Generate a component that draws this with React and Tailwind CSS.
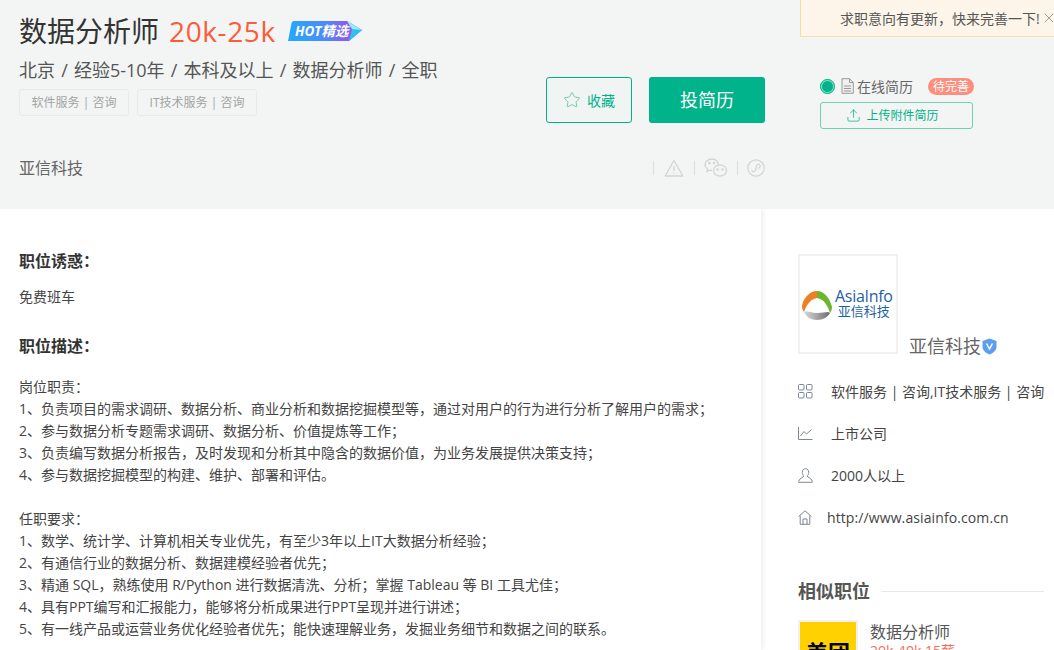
import React from 'react';
import { Star, Upload, X } from 'lucide-react';

const font = { fontFamily: '"Open Sans", "Noto Sans CJK SC", sans-serif' };

const duties = [
  '岗位职责：',
  '1、负责项目的需求调研、数据分析、商业分析和数据挖掘模型等，通过对用户的行为进行分析了解用户的需求；',
  '2、参与数据分析专题需求调研、数据分析、价值提炼等工作；',
  '3、负责编写数据分析报告，及时发现和分析其中隐含的数据价值，为业务发展提供决策支持；',
  '4、参与数据挖掘模型的构建、维护、部署和评估。',
];

const requirements = [
  '任职要求：',
  '1、数学、统计学、计算机相关专业优先，有至少3年以上IT大数据分析经验；',
  '2、有通信行业的数据分析、数据建模经验者优先；',
  '3、精通 SQL，熟练使用 R/Python 进行数据清洗、分析；掌握 Tableau 等 BI 工具尤佳；',
  '4、具有PPT编写和汇报能力，能够将分析成果进行PPT呈现并进行讲述；',
  '5、有一线产品或运营业务优化经验者优先；能快速理解业务，发掘业务细节和数据之间的联系。',
];

function HotBadge() {
  return (
    <svg width="76" height="23" viewBox="0 0 76 23" className="ml-[11px] mt-[1px] shrink-0">
      <defs>
        <linearGradient id="hot" x1="0" x2="1" y1="0" y2="0">
          <stop offset="0" stopColor="#25a8fb" />
          <stop offset="0.5" stopColor="#4b8cf8" />
          <stop offset="0.8" stopColor="#8a5cf0" />
        </linearGradient>
      </defs>
      <path d="M7 1H60L75 10L62 21H1L4 6Q4.500 1 7 1Z" fill="url(#hot)" />
      <path d="M60 1L75 10L62 21L65 9Z" fill="#2fc0ee" />
      <path d="M60 1L75 10L65 9Z" fill="#9be9f6" />
      <text x="8" y="16" fontSize="13.500" fontWeight="700" fontStyle="italic" fill="#fff">HOT精选</text>
    </svg>
  );
}

function Tag({ width, children }) {
  return (
    <span className={`${width} h-[27px] flex items-center justify-center border border-[#e8eaea] rounded-[3px] text-[12px] text-[#a3a3a3] whitespace-nowrap`}>
      {children}
    </span>
  );
}

function ShareIcons() {
  return (
    <div className="flex items-center text-[#d3d5d5]">
      <span className="w-px h-[14px] bg-[#dcdedd]" />
      <svg width="20" height="18" viewBox="0 0 20 18" fill="none" stroke="currentColor" strokeWidth="1.300" className="ml-[10px]">
        <path d="M10 1.500L18.800 17H1.200Z" strokeLinejoin="round" />
        <path d="M10 7V12M10 13.500V14.500" />
      </svg>
      <span className="w-px h-[14px] bg-[#dcdedd] ml-[10px]" />
      <svg width="24" height="20" viewBox="0 0 24 20" fill="none" stroke="currentColor" strokeWidth="1.300" className="ml-[9px]">
        <path d="M14.500 6.500C13.800 3.500 11.500 1 8 1C4 1 1 3.600 1 6.800C1 8.600 2 10 3.500 11L3 13.500L5.500 12.200C6.200 12.400 7 12.500 8 12.500" />
        <ellipse cx="16" cy="12.500" rx="6.500" ry="5.500" />
        <circle cx="5.500" cy="5" r="0.700" fill="currentColor" />
        <circle cx="10" cy="5" r="0.700" fill="currentColor" />
        <circle cx="13.500" cy="11.500" r="0.600" fill="currentColor" />
        <circle cx="18.500" cy="11.500" r="0.600" fill="currentColor" />
      </svg>
      <span className="w-px h-[14px] bg-[#dcdedd] ml-[9px]" />
      <svg width="18" height="18" viewBox="0 0 18 18" fill="none" stroke="currentColor" strokeWidth="1.200" className="ml-[9px]">
        <circle cx="9" cy="9" r="8.200" />
        <path d="M4.800 11C4.800 13.500 8 13.500 8.500 11L9.500 7C10 4.500 13.200 4.500 13.200 7C13.200 8.500 12 9.200 10.800 9" />
      </svg>
    </div>
  );
}

function AsiaInfoLogo() {
  return (
    <div className="w-[100px] h-[100px] border-2 border-[#f1f1f1] flex items-center pl-[1px] shrink-0">
      <svg width="32" height="32" viewBox="0 0 32 32" className="mt-[2px] shrink-0">
        <defs>
          <linearGradient id="ring-bottom" x1="0" x2="1" y1="0" y2="0">
            <stop offset="0" stopColor="#d9d9d9" />
            <stop offset="1" stopColor="#6f6f6f" />
          </linearGradient>
        </defs>
        <path d="M16 2C8 2 2 10 1 17C1 19 1.500 21 3 23C5 17 9 10 16 9Z" fill="#ee7f22" />
        <path d="M16 2C23 2 29 9 31 18C31 20 30.500 22 29 24C27 17 23 10 16 9Z" fill="#6cb52d" />
        <path d="M3 23C5 28 10 31 16 31C22 31 27 28 29 24C27 22 24 24 16 24C9 24 5 21 3 23Z" fill="url(#ring-bottom)" />
      </svg>
      <div className="ml-[2px] flex flex-col items-center text-[#1f5fa3] leading-[15px]">
        <span className="text-[16px] tracking-[-0.3px] whitespace-nowrap">AsiaInfo</span>
        <span className="text-[13px] whitespace-nowrap">亚信科技</span>
      </div>
    </div>
  );
}

function GridIcon() {
  return (
    <svg width="15" height="15" viewBox="0 0 15 15" fill="none" stroke="#7d8794" className="shrink-0">
      <rect x=".5" y=".5" width="5.500" height="5.500" rx="1" />
      <rect x="8.500" y=".5" width="5.500" height="5.500" rx="1" />
      <rect x=".5" y="8.500" width="5.500" height="5.500" rx="1" />
      <rect x="8.500" y="8.500" width="5.500" height="5.500" rx="1" />
    </svg>
  );
}

function TrendIcon() {
  return (
    <svg width="15" height="15" viewBox="0 0 15 15" fill="none" stroke="#7d8794" className="shrink-0">
      <path d="M.5 1V13.500H14.500" />
      <path d="M2.500 10L6 5.500L8.500 8L13.500 3.500" />
    </svg>
  );
}

function PersonIcon() {
  return (
    <svg width="15" height="15" viewBox="0 0 15 15" fill="none" stroke="#7d8794" className="shrink-0">
      <path d="M7.500 .7C5.500 .7 4.300 2.300 4.300 4.300C4.300 6.300 5.300 7.500 5.800 8C5.800 9.500 1 10 .7 13.500V14.300H14.300V13.500C14 10 9.200 9.500 9.200 8C9.700 7.500 10.700 6.300 10.700 4.300C10.700 2.300 9.500 .7 7.500 .7Z" />
    </svg>
  );
}

function HomeIcon() {
  return (
    <svg width="14" height="15" viewBox="0 0 14 15" fill="none" stroke="#7d8794" className="shrink-0">
      <path d="M.6 6.500L7 .8L13.400 6.500M2.200 5.500V14.300H11.800V5.500" />
      <path d="M5 14.300V9H9V14.300" />
    </svg>
  );
}

function InfoRow({ icon, gap, children }) {
  return (
    <div className="h-[42px] flex items-center text-[14px] text-[#444]">
      {icon}
      <span className={gap}>{children}</span>
    </div>
  );
}

export default function App() {
  return (
    <div style={font} className="w-[1054px] h-[650px] overflow-hidden bg-white relative">
      <div className="absolute right-0 top-0 w-[254px] h-[37px] bg-[#fdf5ea] border-l border-b border-[#f7dcae] flex items-center pl-[39px] text-[14px] text-[#555] whitespace-nowrap">
        求职意向有更新，快来完善一下!
        <X size={16} strokeWidth={1.200} className="text-[#888] ml-[1px] shrink-0" />
      </div>

      <header className="h-[209px] bg-[#f3f5f4] flex pl-[19px]">
        <div className="w-[527px] pt-[13px] shrink-0">
          <div className="flex items-center h-[36px]">
            <span className="text-[28px] text-[#333] whitespace-nowrap">数据分析师</span>
            <span className="text-[28px] text-[#fc5c3a] ml-[10px] tracking-[0.6px] whitespace-nowrap">20k-25k</span>
            <HotBadge />
          </div>
          <div className="mt-[9px] h-[24px] leading-[24px] text-[18px] text-[#555] [word-spacing:1.500px] whitespace-nowrap">
            北京 / 经验5-10年 / 本科及以上 / 数据分析师 / 全职
          </div>
          <div className="mt-[7px] flex gap-2">
            <Tag width="w-[110px]">软件服务 | 咨询</Tag>
            <Tag width="w-[120px]">IT技术服务 | 咨询</Tag>
          </div>
          <div className="mt-[40px] text-[16px] leading-[24px] text-[#666]">亚信科技</div>
        </div>

        <div className="w-[219px] shrink-0 pt-[77px]">
          <div className="flex gap-[17px]">
            <button className="w-[86px] h-[46px] border border-[#00b38a] rounded-[3px] bg-[#f0f5f3] flex items-center justify-center gap-[6px] text-[14px] text-[#00b38a]">
              <Star size={18} strokeWidth={1.100} className="text-[#5dbf9f]" />
              收藏
            </button>
            <button className="w-[116px] h-[46px] bg-[#00b38a] rounded-[3px] text-[18px] text-white">投简历</button>
          </div>
          <div className="mt-[35px] flex justify-end">
            <ShareIcons />
          </div>
        </div>

        <div className="ml-[55px] pt-[76px] w-[153px] shrink-0">
          <div className="h-[20px] flex items-center text-[14px] text-[#666]">
            <span className="w-[15px] h-[15px] rounded-full bg-[#00b38a] border-2 border-[#8adfc9] outline-1 outline-[#00b38a] -outline-offset-1 shrink-0" />
            <svg width="13" height="16" viewBox="0 0 13 16" fill="none" className="ml-[6px] shrink-0">
              <path d="M1 .7H8.500L12.300 4.500V15.300H1Z" fill="#f0f0f0" stroke="#999" />
              <path d="M8.500 .7V4.500H12.300M3 8H10M3 10.500H10M3 13H10" stroke="#999" />
            </svg>
            <span className="ml-[3px] whitespace-nowrap">在线简历</span>
            <span className="ml-[15px] h-[17px] px-[5px] rounded-full bg-[#fd8e7d] text-white text-[12px] leading-[17px] whitespace-nowrap">待完善</span>
          </div>
          <div className="mt-[6px] h-[27px] border border-[#6fd0b8] rounded-[3px] flex items-center justify-center pr-[8px] gap-[5px] text-[12px] text-[#00b38a]">
            <Upload size={15} strokeWidth={1.200} />
            上传附件简历
          </div>
        </div>
      </header>

      <div className="flex overflow-hidden">
        <main className="w-[761px] h-[441px] shrink-0 pl-[19px] pt-[41px] shadow-[2px_0_5px_rgba(0,0,0,0.07)] text-[14px] leading-[22px] text-[#444] whitespace-nowrap">
          <h3 className="text-[16px] leading-[22px] font-bold text-[#333]">职位诱惑：</h3>
          <p className="mt-[14px]">免费班车</p>
          <h3 className="mt-[27px] text-[16px] leading-[22px] font-bold text-[#333]">职位描述：</h3>
          <div className="mt-[19px]">
            {duties.map((line) => (
              <p key={line}>{line}</p>
            ))}
          </div>
          <div className="mt-[22px]">
            {requirements.map((line) => (
              <p key={line}>{line}</p>
            ))}
          </div>
        </main>

        <aside className="flex-1 pl-[37px] pr-[10px] pt-[45px] whitespace-nowrap">
          <div className="flex items-end">
            <AsiaInfoLogo />
            <span className="ml-[11px] text-[18px] leading-[24px] text-[#666] -mb-[4px]">亚信科技</span>
            <svg width="15" height="17" viewBox="0 0 15 17" className="ml-[1px] -mb-[1px]">
              <path d="M7.500 .5L14.500 3V9C14.500 12.500 11 15 7.500 16.500C4 15 .5 12.500 .5 9V3Z" fill="#5c9ff0" />
              <path d="M4.500 5.500L7.500 11L10.500 5.500" fill="none" stroke="#fff" strokeWidth="1.500" />
            </svg>
          </div>
          <div className="mt-[16px]">
            <InfoRow icon={<GridIcon />} gap="ml-[18px]">软件服务 | 咨询,IT技术服务 | 咨询</InfoRow>
            <InfoRow icon={<TrendIcon />} gap="ml-[18px]">上市公司</InfoRow>
            <InfoRow icon={<PersonIcon />} gap="ml-[18px]">2000人以上</InfoRow>
            <InfoRow icon={<HomeIcon />} gap="ml-[15px] tracking-[0.1px]">http://www.asiainfo.com.cn</InfoRow>
          </div>
          <div className="mt-[41px] flex items-center gap-[11px]">
            <span className="text-[18px] leading-[24px] font-bold text-[#555]">相似职位</span>
            <span className="flex-1 h-px bg-[#e8e8e8]" />
          </div>
          <div className="mt-[17px] flex">
            <div className="w-[60px] h-[60px] border-2 border-[#f1f1f1] bg-[#ffd100] flex justify-center pt-[16px] text-[22px] leading-[28px] font-bold text-black shrink-0">
              美团
            </div>
            <div className="ml-[12px] pt-[2px]">
              <div className="text-[16px] leading-[20px] text-[#555]">数据分析师</div>
              <div className="text-[14px] leading-[18px] text-[#fd6b5a]">20k-40k·15薪</div>
            </div>
          </div>
        </aside>
      </div>
    </div>
  );
}
